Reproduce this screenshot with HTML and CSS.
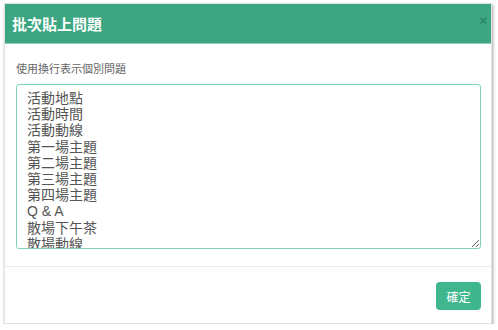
FILE: index.html
```html
<!doctype html>
<html>
<head>
<meta charset="utf-8">
<title>批次貼上問題</title>
	<link rel="stylesheet" href="styles.css">
</head>

<body>

	<!-- ------------------------------------------------------------------->

	<div class="modal">
		<div class="modal-header">
			<h4 class="modal-title">批次貼上問題</h4>
			<span class="close">&times;</span>
		</div>

		<div class="modal-body">
			<label class="hint" for="questions">使用換行表示個別問題</label>
			<textarea id="questions" class="question-box">活動地點
活動時間
活動動線
第一場主題
第二場主題
第三場主題
第四場主題
Q &amp; A
散場下午茶
散場動線
散場交通</textarea>
		</div>

		<div class="modal-footer">
			<button type="button" class="btn-ok">確定</button>
		</div>
	</div>

</body>
</html>
```

FILE: styles.css
```css
/*Page*/
body{
	margin: 0;
	padding: 3px 6px 0 4px;
	background: #fff;
	font-family: "Liberation Sans", "Noto Sans CJK TC", sans-serif;
}

/*Modal box*/
.modal{
	width: 486px;
	border: 1px solid #e2e2e6;
	box-shadow: 1px 2px 3px rgba(0,0,0,0.35);
	background: #fff;
}

.modal-header{
	display: flex;
	align-items: center;
	justify-content: space-between;
	height: 39px;
	padding: 0 4px 0 7px;
	background: #3ba681;
	border-bottom: 1px solid #8fd2b9;
}

.modal-title{
	margin: 0;
	color: #fff;
	font-size: 15px;
	font-weight: bold;
}

.close{
	color: #000;
	opacity: 0.2;
	font-size: 13px;
	font-weight: bold;
	margin-top: -6px;
}

/*---------------------------------------------*/
.modal-body{
	padding: 18px 10px 17px 11px;
}

.hint{
	display: block;
	color: #666;
	font-size: 11px;
	line-height: 14px;
	margin-bottom: 8px;
}

.question-box{
	display: block;
	box-sizing: border-box;
	width: 465px;
	height: 165px;
	margin: 0;
	padding: 5px 10px;
	border: 1px solid #7fd3bb;
	border-radius: 3px;
	color: #555;
	font-family: "Liberation Sans", "Noto Sans CJK TC", sans-serif;
	font-size: 14px;
	line-height: 16.2px;
	overflow: hidden;
	outline: none;
}

/*---------------------------------------------*/
.modal-footer{
	display: flex;
	justify-content: flex-end;
	padding: 15px 10px 13px;
	border-top: 1px solid #ebebef;
}

.btn-ok{
	width: 45px;
	height: 28px;
	padding: 0;
	border: 0;
	border-radius: 4px;
	background: #3fb68d;
	color: #fff;
	font-family: "Liberation Sans", "Noto Sans CJK TC", sans-serif;
	font-size: 12px;
}
```
